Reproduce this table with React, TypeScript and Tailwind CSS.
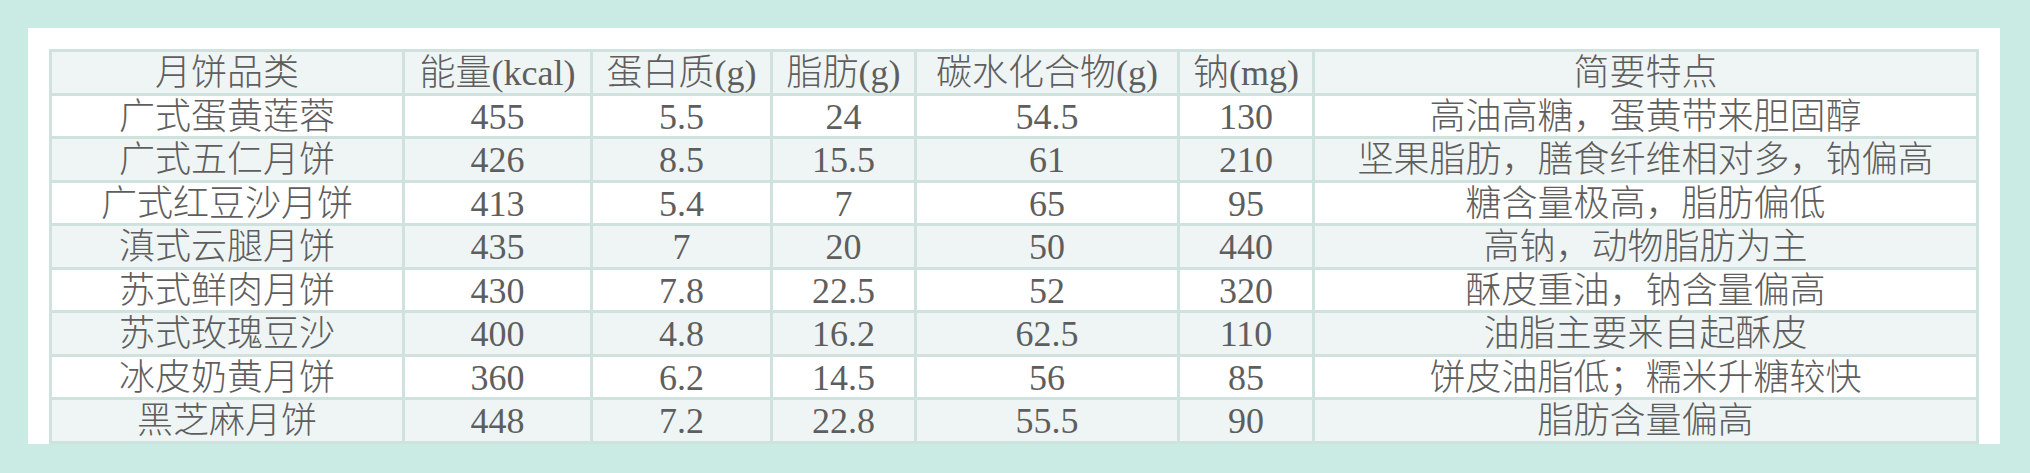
const HEAD = ["月饼品类", "能量(kcal)", "蛋白质(g)", "脂肪(g)", "碳水化合物(g)", "钠(mg)", "简要特点"];

const ROWS = [
  ["广式蛋黄莲蓉", "455", "5.5", "24", "54.5", "130", "高油高糖，蛋黄带来胆固醇"],
  ["广式五仁月饼", "426", "8.5", "15.5", "61", "210", "坚果脂肪，膳食纤维相对多，钠偏高"],
  ["广式红豆沙月饼", "413", "5.4", "7", "65", "95", "糖含量极高，脂肪偏低"],
  ["滇式云腿月饼", "435", "7", "20", "50", "440", "高钠，动物脂肪为主"],
  ["苏式鲜肉月饼", "430", "7.8", "22.5", "52", "320", "酥皮重油，钠含量偏高"],
  ["苏式玫瑰豆沙", "400", "4.8", "16.2", "62.5", "110", "油脂主要来自起酥皮"],
  ["冰皮奶黄月饼", "360", "6.2", "14.5", "56", "85", "饼皮油脂低；糯米升糖较快"],
  ["黑芝麻月饼", "448", "7.2", "22.8", "55.5", "90", "脂肪含量偏高"],
];

const WIDTHS = ["w-[353px]", "w-[188px]", "w-[180px]", "w-[144px]", "w-[263px]", "w-[135px]", "w-[664px]"];

export default function App() {
  return (
    <div className="w-[2030px] h-[473px] bg-[#c9ebe3] pt-[28px] pl-[28px]">
      <div className="w-[1972px] h-[416px] bg-white pt-[21px] pl-[21px]">
        <table
          className="w-[1928px] table-fixed border-collapse border-[3px] border-[#cfe2dd] text-[36px] leading-none font-light text-[#5e5e5e]"
          style={{ fontFamily: '"Liberation Serif", "Noto Sans CJK SC", serif' }}
        >
          <colgroup>
            {WIDTHS.map((w, i) => (
              <col key={i} className={w} />
            ))}
          </colgroup>
          <thead>
            <tr className="h-[43.5px] bg-[#eef5f4]">
              {HEAD.map((h) => (
                <th key={h} className="border-[3px] border-[#cfe2dd] p-0 pt-[2px] text-center font-light whitespace-nowrap">
                  {h}
                </th>
              ))}
            </tr>
          </thead>
          <tbody>
            {ROWS.map((r, i) => (
              <tr key={r[0]} className={`h-[43.5px] ${i % 2 === 1 ? "bg-[#eef5f4]" : "bg-white"}`}>
                {r.map((c, j) => (
                  <td key={j} className="border-[3px] border-[#cfe2dd] p-0 pt-[2px] text-center whitespace-nowrap">
                    {c}
                  </td>
                ))}
              </tr>
            ))}
          </tbody>
        </table>
      </div>
    </div>
  );
}
